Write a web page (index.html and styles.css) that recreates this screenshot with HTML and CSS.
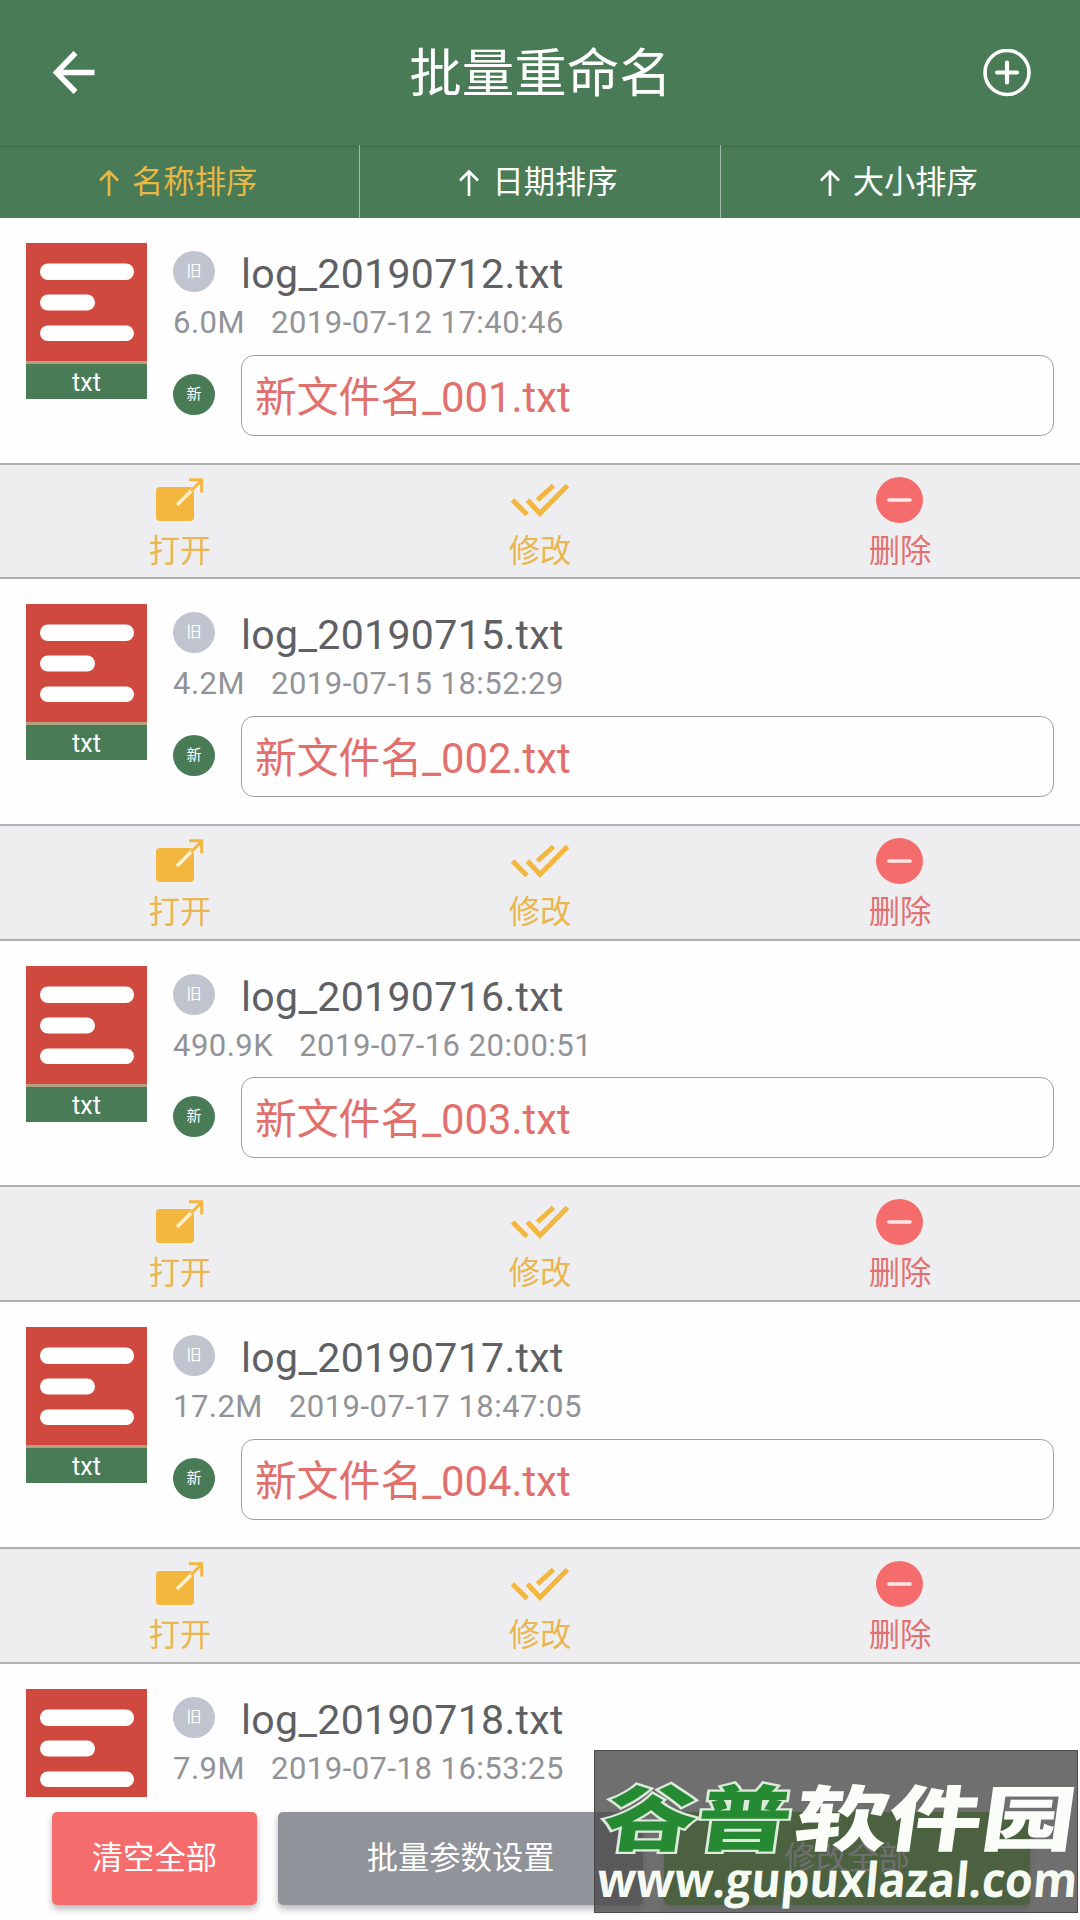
FILE: index.html
```html
<!DOCTYPE html>
<html lang="zh-CN">
<head>
<meta charset="utf-8">
<title>批量重命名</title>
<link rel="stylesheet" href="styles.css">
</head>
<body>
<svg class="defs" aria-hidden="true">
  <symbol id="up" viewBox="0 0 20 26"><path d="M10 26V2M1 10.5L10 1.5L19 10.5" fill="none" stroke="currentColor" stroke-width="2.7"/></symbol>
  <symbol id="doc" viewBox="0 0 121 118"><g fill="#fff"><rect x="14" y="20.5" width="94" height="16.5" rx="8"/><rect x="14" y="51.5" width="55" height="16" rx="8"/><rect x="14" y="82.5" width="94" height="15.5" rx="7.7"/></g></symbol>
  <symbol id="open" viewBox="0 0 50 48"><rect x="1" y="11" width="38" height="34" rx="4" fill="#f3b63f"/><path d="M22 29L39 12" stroke="#fff0cf" stroke-width="3.6" fill="none"/><path d="M36 15L46 5M34 3.7H46.7V16.5" fill="none" stroke="#f3b63f" stroke-width="3"/></symbol>
  <symbol id="checks" viewBox="0 0 60 36"><path d="M2.5 18L17 32.5M17.500 18L30 31.500L57.500 3.500M27.500 18L43.500 3.500" fill="none" stroke="#f3b63f" stroke-width="5"/></symbol>
  <symbol id="remove" viewBox="0 0 48 48"><ellipse cx="23.500" cy="24" rx="23.500" ry="23" fill="#f56c6c"/><path d="M13 24H34" stroke="#fbe9e9" stroke-width="3.600" stroke-linecap="round"/></symbol>
</svg>
<main class="screen">
  <header class="header">
    <svg class="back" viewBox="0 0 44 44"><path d="M42.500 21.500H5M23.500 2L4.500 21.500L23.500 41" fill="none" stroke="#fff" stroke-width="5.500"/></svg>
    <h1>批量重命名</h1>
    <svg class="add" viewBox="0 0 48 48"><circle cx="24" cy="23.500" r="22" fill="none" stroke="#fff" stroke-width="3.600"/><path d="M24 13.500V33.500M14 23.500H34" stroke="#fff" stroke-width="4.200" stroke-linecap="round"/></svg>
  </header>
  <nav class="tabs">
    <div class="tab active"><svg><use href="#up"/></svg>名称排序</div>
    <div class="tab"><svg><use href="#up"/></svg>日期排序</div>
    <div class="tab"><svg><use href="#up"/></svg>大小排序</div>
  </nav>
  <section class="list">
    <article class="item">
      <div class="file">
        <div class="thumb"><svg><use href="#doc"/></svg><span>txt</span></div>
        <div class="info">
          <div class="old"><i class="badge">旧</i><span class="name">log_20190712.txt</span></div>
          <div class="meta"><span>6.0M</span><span>2019-07-12 17:40:46</span></div>
          <div class="new"><i class="badge fresh">新</i><div class="field">新文件名_001.txt</div></div>
        </div>
      </div>
      <div class="actions">
        <div class="action"><svg class="i-open"><use href="#open"/></svg>打开</div>
        <div class="action"><svg class="i-checks"><use href="#checks"/></svg>修改</div>
        <div class="action danger"><svg class="i-remove"><use href="#remove"/></svg>删除</div>
      </div>
    </article>
    <article class="item">
      <div class="file">
        <div class="thumb"><svg><use href="#doc"/></svg><span>txt</span></div>
        <div class="info">
          <div class="old"><i class="badge">旧</i><span class="name">log_20190715.txt</span></div>
          <div class="meta"><span>4.2M</span><span>2019-07-15 18:52:29</span></div>
          <div class="new"><i class="badge fresh">新</i><div class="field">新文件名_002.txt</div></div>
        </div>
      </div>
      <div class="actions">
        <div class="action"><svg class="i-open"><use href="#open"/></svg>打开</div>
        <div class="action"><svg class="i-checks"><use href="#checks"/></svg>修改</div>
        <div class="action danger"><svg class="i-remove"><use href="#remove"/></svg>删除</div>
      </div>
    </article>
    <article class="item">
      <div class="file">
        <div class="thumb"><svg><use href="#doc"/></svg><span>txt</span></div>
        <div class="info">
          <div class="old"><i class="badge">旧</i><span class="name">log_20190716.txt</span></div>
          <div class="meta"><span>490.9K</span><span>2019-07-16 20:00:51</span></div>
          <div class="new"><i class="badge fresh">新</i><div class="field">新文件名_003.txt</div></div>
        </div>
      </div>
      <div class="actions">
        <div class="action"><svg class="i-open"><use href="#open"/></svg>打开</div>
        <div class="action"><svg class="i-checks"><use href="#checks"/></svg>修改</div>
        <div class="action danger"><svg class="i-remove"><use href="#remove"/></svg>删除</div>
      </div>
    </article>
    <article class="item">
      <div class="file">
        <div class="thumb"><svg><use href="#doc"/></svg><span>txt</span></div>
        <div class="info">
          <div class="old"><i class="badge">旧</i><span class="name">log_20190717.txt</span></div>
          <div class="meta"><span>17.2M</span><span>2019-07-17 18:47:05</span></div>
          <div class="new"><i class="badge fresh">新</i><div class="field">新文件名_004.txt</div></div>
        </div>
      </div>
      <div class="actions">
        <div class="action"><svg class="i-open"><use href="#open"/></svg>打开</div>
        <div class="action"><svg class="i-checks"><use href="#checks"/></svg>修改</div>
        <div class="action danger"><svg class="i-remove"><use href="#remove"/></svg>删除</div>
      </div>
    </article>
    <article class="item">
      <div class="file">
        <div class="thumb"><svg><use href="#doc"/></svg></div>
        <div class="info">
          <div class="old"><i class="badge">旧</i><span class="name">log_20190718.txt</span></div>
          <div class="meta"><span>7.9M</span><span>2019-07-18 16:53:25</span></div>
        </div>
      </div>
    </article>
  </section>
  <footer class="footer">
    <button class="btn clear">清空全部</button>
    <button class="btn params">批量参数设置</button>
    <button class="btn apply">修改全部</button>
  </footer>
  <aside class="watermark">
    <svg viewBox="0 0 482 161">
      <g class="brand" transform="translate(0 94) skewX(-8) scale(1 .87)">
        <text class="green" x="5" y="0" textLength="188" lengthAdjust="spacingAndGlyphs">谷普</text>
        <text class="white" x="197" y="0" textLength="280" lengthAdjust="spacingAndGlyphs">软件园</text>
      </g>
      <g transform="translate(0 146) skewX(-5)">
        <text class="url" x="1" y="0" textLength="480" lengthAdjust="spacingAndGlyphs">www.gupuxlazal.com</text>
      </g>
    </svg>
  </aside>
</main>
</body>
</html>
```
FILE: styles.css
```css
* { box-sizing: border-box; }
body { margin: 0; background: #fff; font-family: Roboto, "Noto Sans CJK SC", sans-serif; }
.defs { position: absolute; width: 0; height: 0; }
.screen { position: relative; width: 1080px; height: 1920px; overflow: hidden; display: flex; flex-direction: column; background: #fefefe; }
.header { flex: none; height: 145px; padding: 0 49px 0 52px; display: flex; align-items: center; justify-content: space-between; background: #497b56; color: #fff; }
.header h1 { margin: 0; padding: 2px 0 0 2px; font-size: 52.5px; font-weight: 400; line-height: 80px; }
.back { width: 44px; height: 44px; }
.add { width: 48px; height: 48px; }
.tabs { flex: none; height: 73px; display: flex; background: linear-gradient(#426f4d, #497b56 5px); color: #fff; }
.tab { flex: 1; display: flex; align-items: center; justify-content: center; gap: 13px; padding: 2px 3px 0 0; font-size: 31.3px; line-height: 46px; border-right: 1px solid #a3b9a8; }
.tab:last-child { border: 0; }
.tab svg { width: 20px; height: 26px; }
.active { color: #e8b744; }
.list { flex: none; height: 1579px; overflow: hidden; }
.item { height: 361.4px; }
.file { height: 244.6px; padding: 25px 26px 0 26px; display: flex; gap: 26px; }
.thumb { width: 121px; height: 156px; background: #d0493e; display: flex; flex-direction: column; }
.thumb svg { width: 121px; height: 118px; flex: none; }
.thumb span { height: 38px; border-top: 3px solid #b5a084; background: #497b56; color: #fff; font-size: 25px; line-height: 38px; text-align: center; }
.info { flex: 1; padding-top: 4px; }
.old { height: 50px; display: flex; gap: 26px; }
.badge { flex: none; margin-top: 4px; width: 42px; height: 41px; border-radius: 50%; background: #bfc4cf; color: #fff; font-size: 15px; font-style: normal; line-height: 41px; text-align: center; }
.name { font-size: 41px; line-height: 54px; color: #5e6063; letter-spacing: .35px; }
.meta { display: flex; gap: 26px; height: 45px; font-size: 31px; line-height: 51px; color: #919398; letter-spacing: .48px; }
.new { margin-top: 12.6px; display: flex; align-items: center; gap: 26px; }
.fresh { margin: 0 0 2px; background: #497b56; }
.field { flex: 1; height: 81px; padding-left: 13px; border: 1px solid #a0a0a0; border-radius: 13px; font-size: 41.8px; line-height: 83px; color: #e1706d; }
.actions { height: 116.8px; display: flex; background: #eeeef0; border-top: 2px solid #b0b0b0; border-bottom: 2px solid #b0b0b0; }
.action { flex: 1; display: flex; flex-direction: column; align-items: center; padding-top: 10px; font-size: 31.3px; line-height: 48px; color: #eab64f; }
.action svg { flex: none; height: 50px; margin-bottom: 3px; }
.i-open { width: 50px; }
.i-checks { width: 60px; }
.i-remove { width: 48px; }
.danger { color: #e27272; }
.footer { flex: none; height: 123px; padding: 15px 50px 15px 52px; display: flex; gap: 21px; background: #fefefe; }
.btn { height: 93px; padding: 0; border: 0; border-radius: 5px; color: #fff; font: 31.300px/94px Roboto, "Noto Sans CJK SC", sans-serif; box-shadow: 0 4px 7px rgba(0,0,0,.28); }
.clear { width: 205px; background: #f56c6c; }
.params { width: 366px; background: #909399; }
.apply { width: 366px; background: #4bb914; }
.watermark { position: absolute; left: 594px; top: 1750px; width: 484px; height: 163px; background: rgba(75,75,75,.8); border: 1px solid #4a4a4a; }
.watermark svg { display: block; width: 100%; height: 100%; }
.brand { font: 900 82px "Noto Sans CJK SC", sans-serif; }
.green { fill: #268a32; stroke: #dcebdc; stroke-width: 5px; paint-order: stroke; }
.white { fill: #fafdf8; }
.url { font: 700 48px "Open Sans", sans-serif; fill: #f5faf2; }
```
